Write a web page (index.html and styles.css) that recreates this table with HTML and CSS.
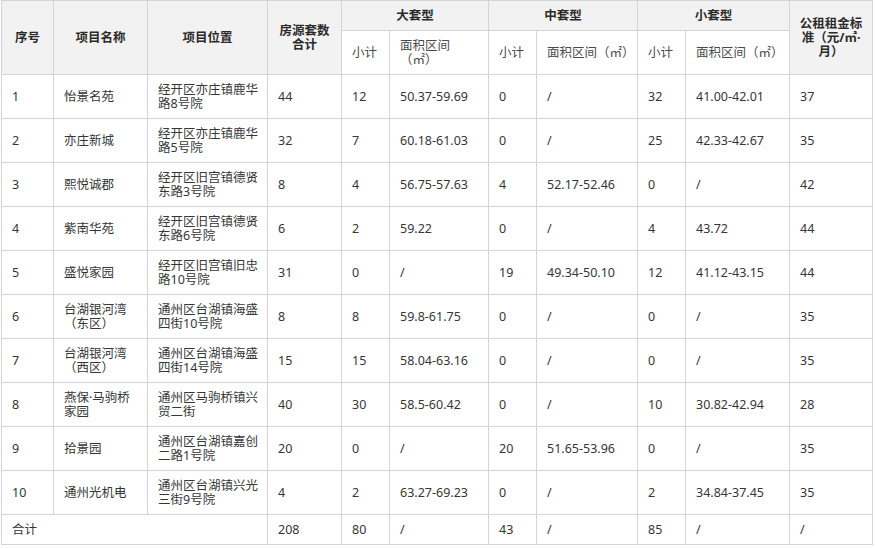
FILE: index.html
```html
<!DOCTYPE html>
<html lang="zh-CN">
<head>
<meta charset="utf-8">
<title>公租房房源表</title>
<link rel="stylesheet" href="styles.css">
</head>
<body>
<table class="rent-table">
  <colgroup>
    <col class="c-no"><col class="c-name"><col class="c-loc"><col class="c-total">
    <col class="c-sub"><col class="c-area-l"><col class="c-sub"><col class="c-area-m">
    <col class="c-sub"><col class="c-area-s"><col class="c-rent">
  </colgroup>
  <thead>
    <tr class="head-top">
      <th rowspan="2">序号</th>
      <th rowspan="2">项目名称</th>
      <th rowspan="2">项目位置</th>
      <th rowspan="2">房源套数<br>合计</th>
      <th colspan="2">大套型</th>
      <th colspan="2">中套型</th>
      <th colspan="2">小套型</th>
      <th rowspan="2">公租租金标<br>准（元/㎡·<br>月）</th>
    </tr>
    <tr class="head-sub">
      <td>小计</td>
      <td>面积区间<br>（㎡）</td>
      <td>小计</td>
      <td class="nowrap">面积区间（㎡）</td>
      <td>小计</td>
      <td class="nowrap">面积区间（㎡）</td>
    </tr>
  </thead>
  <tbody>
    <tr><td>1</td><td>怡景名苑</td><td>经开区亦庄镇鹿华<br>路8号院</td><td>44</td><td>12</td><td>50.37-59.69</td><td>0</td><td>/</td><td>32</td><td>41.00-42.01</td><td>37</td></tr>
    <tr><td>2</td><td>亦庄新城</td><td>经开区亦庄镇鹿华<br>路5号院</td><td>32</td><td>7</td><td>60.18-61.03</td><td>0</td><td>/</td><td>25</td><td>42.33-42.67</td><td>35</td></tr>
    <tr><td>3</td><td>熙悦诚郡</td><td>经开区旧宫镇德贤<br>东路3号院</td><td>8</td><td>4</td><td>56.75-57.63</td><td>4</td><td>52.17-52.46</td><td>0</td><td>/</td><td>42</td></tr>
    <tr><td>4</td><td>紫南华苑</td><td>经开区旧宫镇德贤<br>东路6号院</td><td>6</td><td>2</td><td>59.22</td><td>0</td><td>/</td><td>4</td><td>43.72</td><td>44</td></tr>
    <tr><td>5</td><td>盛悦家园</td><td>经开区旧宫镇旧忠<br>路10号院</td><td>31</td><td>0</td><td>/</td><td>19</td><td>49.34-50.10</td><td>12</td><td>41.12-43.15</td><td>44</td></tr>
    <tr><td>6</td><td>台湖银河湾<br>（东区）</td><td>通州区台湖镇海盛<br>四街10号院</td><td>8</td><td>8</td><td>59.8-61.75</td><td>0</td><td>/</td><td>0</td><td>/</td><td>35</td></tr>
    <tr><td>7</td><td>台湖银河湾<br>（西区）</td><td>通州区台湖镇海盛<br>四街14号院</td><td>15</td><td>15</td><td>58.04-63.16</td><td>0</td><td>/</td><td>0</td><td>/</td><td>35</td></tr>
    <tr><td>8</td><td>燕保·马驹桥<br>家园</td><td>通州区马驹桥镇兴<br>贸二街</td><td>40</td><td>30</td><td>58.5-60.42</td><td>0</td><td>/</td><td>10</td><td>30.82-42.94</td><td>28</td></tr>
    <tr><td>9</td><td>拾景园</td><td>通州区台湖镇嘉创<br>二路1号院</td><td>20</td><td>0</td><td>/</td><td>20</td><td>51.65-53.96</td><td>0</td><td>/</td><td>35</td></tr>
    <tr><td>10</td><td>通州光机电</td><td>通州区台湖镇兴光<br>三街9号院</td><td>4</td><td>2</td><td>63.27-69.23</td><td>0</td><td>/</td><td>2</td><td>34.84-37.45</td><td>35</td></tr>
    <tr class="total-row"><td colspan="3">合计</td><td>208</td><td>80</td><td>/</td><td>43</td><td>/</td><td>85</td><td>/</td><td>/</td></tr>
  </tbody>
</table>
</body>
</html>
```

FILE: styles.css
```css
html, body {
  margin: 0;
  padding: 0;
  background: #ffffff;
}

body {
  padding-left: 1px;
  font-family: "Noto Sans", "Noto Sans CJK SC", sans-serif;
  font-size: 12.5px;
  color: #363636;
}

.rent-table {
  border-collapse: collapse;
  table-layout: fixed;
  width: 871px;
}

.c-no { width: 52px; }
.c-name { width: 94px; }
.c-loc { width: 120px; }
.c-total { width: 74px; }
.c-sub { width: 48px; }
.c-area-l { width: 99px; }
.c-area-m { width: 101px; }
.c-area-s { width: 104px; }
.c-rent { width: 83px; }

.rent-table th,
.rent-table td {
  border: 1px solid #d4d4d4;
  padding: 0 6px 0 10px;
  line-height: 14px;
  vertical-align: middle;
  text-align: left;
  font-weight: 400;
}

.rent-table th {
  background: #f2f2f2;
  color: #2b2b2b;
  font-weight: 700;
  text-align: center;
  padding: 0 4px;
}

.head-top {
  height: 30px;
}

.head-sub {
  height: 44px;
}

.head-sub td {
  color: #4a4a4a;
}

.nowrap {
  white-space: nowrap;
}

.rent-table tbody tr {
  height: 44px;
}

.rent-table tbody tr.total-row {
  height: 30px;
}
```
